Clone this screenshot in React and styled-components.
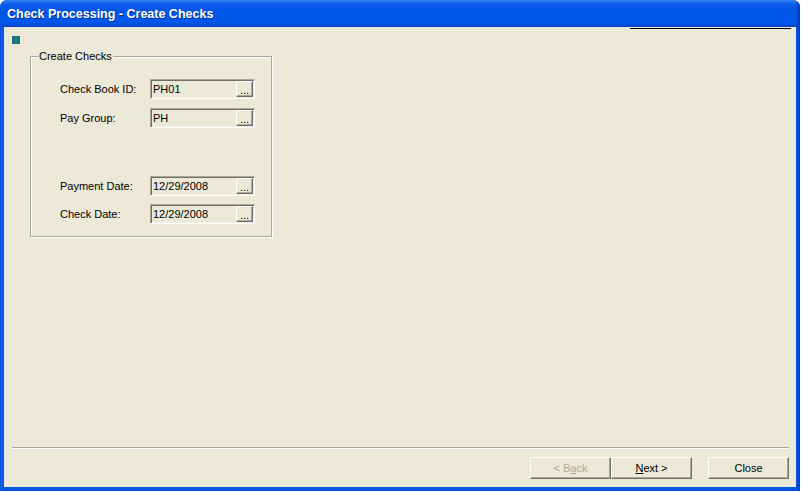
import React from "react";
import styled, { createGlobalStyle } from "styled-components";

const Global = createGlobalStyle`
  html, body { margin: 0; padding: 0; background: #ffffff; }
  body { font-family: "Liberation Sans", Arial, sans-serif; font-size: 11px; color: #000; }
`;

const Window = styled.div`
  width: 800px;
  height: 491px;
  display: flex;
  flex-direction: column;
  border-radius: 7px 7px 0 0;
  overflow: hidden;
  background: #0a4fdc;
  box-sizing: border-box;
`;

const TitleBar = styled.div`
  height: 27px;
  flex: none;
  display: flex;
  align-items: center;
  padding-left: 7px;
  background: linear-gradient(
    to bottom,
    #4596fb 0px,
    #1d6cf0 2px,
    #0a5ae8 5px,
    #0055e5 12px,
    #0059ee 20px,
    #0053e0 24px,
    #0a44c6 27px
  );
  box-shadow: inset -3px 0 3px -1px #0238b8;
`;

const Title = styled.span`
  font-family: "Liberation Sans", Arial, sans-serif;
  font-weight: bold;
  font-size: 12.5px;
  color: #ffffff;
  text-shadow: 1px 1px 0 #0c2f8e;
`;

const Frame = styled.div`
  flex: 1;
  display: flex;
  padding: 0 4px 4px 4px;
  background: linear-gradient(to right, #0831d9 0px, #166aee 1px, #0055e5 3px, #0055e5 calc(100% - 3px), #0831d9 100%);
  min-height: 0;
`;

const Client = styled.div`
  flex: 1;
  display: flex;
  flex-direction: column;
  background: #ece9d8;
  min-width: 0;
`;

const TopRule = styled.div`
  align-self: flex-end;
  width: 161px;
  height: 1px;
  margin: 1px 5px 0 0;
  background: #000;
`;

const Body = styled.div`
  flex: 1;
  padding: 7px 0 0 8px;
  display: flex;
  flex-direction: column;
  align-items: flex-start;
`;

const Marker = styled.div`
  width: 8px;
  height: 8px;
  box-sizing: border-box;
  background: #0d8080;
  border: 1px solid #2f6060;
`;

const GroupBox = styled.div`
  position: relative;
  margin: 12px 0 0 18px;
  width: 242px;
  box-sizing: border-box;
  border: 1px solid #aca899;
  box-shadow: inset 1px 1px 0 #ffffff, 1px 1px 0 #ffffff;
  padding: 22px 0 12px 29px;
  display: flex;
  flex-direction: column;
`;

const Caption = styled.span`
  position: absolute;
  top: -7px;
  left: 7px;
  padding: 0 1px;
  background: #ece9d8;
  line-height: 13px;
`;

const Row = styled.div`
  display: flex;
  align-items: center;
  height: 20px;
  margin-top: ${(p) => p.$gap || 0}px;
`;

const Label = styled.span`
  width: 90px;
  flex: none;
`;

const Field = styled.div`
  width: 105px;
  height: 20px;
  box-sizing: border-box;
  display: flex;
  align-items: center;
  justify-content: space-between;
  border: 1px solid;
  border-color: #aca899 #ffffff #ffffff #aca899;
  box-shadow: inset 1px 1px 0 #716f64, inset -1px -1px 0 #f1efe2;
  padding: 0 1px 0 2px;
  background: #ece9d8;
`;

const FieldText = styled.span`
  line-height: 14px;
`;

const Raised = styled.div`
  box-sizing: border-box;
  border: 1px solid;
  border-color: #ffffff #716f64 #716f64 #ffffff;
  box-shadow: inset -1px -1px 0 #aca899;
  background: #ece9d8;
  display: flex;
  align-items: center;
  justify-content: center;
`;

const Browse = styled(Raised)`
  width: 17px;
  height: 16px;
  font-size: 11px;
  line-height: 10px;
  padding-top: 2px;
`;

const Separator = styled.div`
  margin: 0 7px 0 8px;
  height: 1px;
  background: #aca899;
  border-bottom: 1px solid #ffffff;
`;

const ButtonBar = styled.div`
  display: flex;
  justify-content: flex-end;
  padding: 8px 7px 8px 0;
`;

const Button = styled(Raised)`
  width: 81px;
  height: 22px;
  margin-left: ${(p) => p.$gap || 0}px;
  color: ${(p) => (p.$disabled ? "#aca899" : "#000")};
  font-size: 11px;
  u { text-decoration: underline; }
`;

const rows = [
  { label: "Check Book ID:", value: "PH01", gap: 0 },
  { label: "Pay Group:", value: "PH", gap: 9 },
  { label: "Payment Date:", value: "12/29/2008", gap: 48 },
  { label: "Check Date:", value: "12/29/2008", gap: 8 },
];

export default function App() {
  return (
    <>
      <Global />
      <Window>
        <TitleBar>
          <Title>Check Processing - Create Checks</Title>
        </TitleBar>
        <Frame>
          <Client>
            <TopRule />
            <Body>
              <Marker />
              <GroupBox>
                <Caption>Create Checks</Caption>
                {rows.map((r) => (
                  <Row key={r.label} $gap={r.gap}>
                    <Label>{r.label}</Label>
                    <Field>
                      <FieldText>{r.value}</FieldText>
                      <Browse>...</Browse>
                    </Field>
                  </Row>
                ))}
              </GroupBox>
            </Body>
            <Separator />
            <ButtonBar>
              <Button $disabled>
                {"< B"}<u>a</u>{"ck"}
              </Button>
              <Button>
                <u>N</u>{"ext >"}
              </Button>
              <Button $gap={16}>Close</Button>
            </ButtonBar>
          </Client>
        </Frame>
      </Window>
    </>
  );
}
